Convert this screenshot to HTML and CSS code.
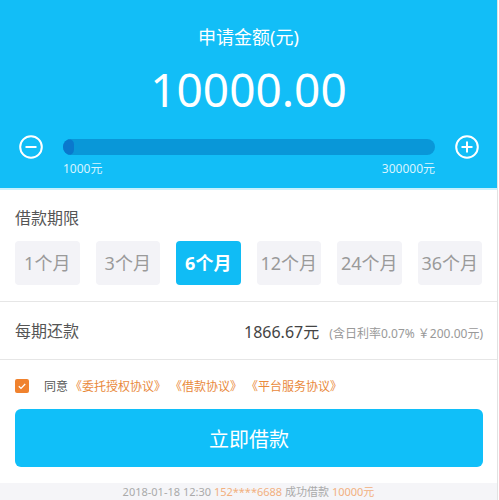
FILE: index.html
```html
<!DOCTYPE html>
<html lang="zh-CN">
<head>
  <meta charset="UTF-8" />
  <meta name="viewport" content="width=device-width, initial-scale=1.0"/>
  <title>申请借款</title>
  <link rel="stylesheet" href="styles.css">
</head>
<body>
  <div class="page">
    <div class="head">
      <h1 class="title">申请金额(元)</h1>
      <div class="amount">10000.00</div>
      <div class="slider">
        <span class="round">
          <svg width="24" height="24" viewBox="0 0 24 24"><circle cx="12" cy="12" r="10.8" fill="none" stroke="#fff" stroke-width="2"/><path d="M6.5 12h11" stroke="#fff" stroke-width="2"/></svg>
        </span>
        <div class="track"><div class="fill" style="width: 11px"></div></div>
        <span class="round">
          <svg width="24" height="24" viewBox="0 0 24 24"><circle cx="12" cy="12" r="10.8" fill="none" stroke="#fff" stroke-width="2"/><path d="M6.5 12h11M12 6.5v11" stroke="#fff" stroke-width="2"/></svg>
        </span>
      </div>
      <div class="range">
        <span>1000元</span>
        <span>300000元</span>
      </div>
    </div>

    <div class="term">
      <div class="label">借款期限</div>
      <div class="months">
        <div class="month">1个月</div>
        <div class="month">3个月</div>
        <div class="month selected">6个月</div>
        <div class="month">12个月</div>
        <div class="month">24个月</div>
        <div class="month">36个月</div>
      </div>
    </div>

    <div class="repay">
      <div class="label">每期还款</div>
      <div class="sum">1866.67元 <small>(含日利率0.07% ￥200.00元)</small></div>
    </div>

    <div class="agree">
      <span class="check">
        <svg width="14" height="14" viewBox="0 0 14 14"><rect width="14" height="14" rx="2" fill="#f0822e"/><path d="M3.8 7.2l2.2 2.2 4.2-4.4" fill="none" stroke="#fff" stroke-width="1.3"/></svg>
      </span>
      <span class="agree-text">同意</span>
      <a class="doc">《委托授权协议》</a>
      <a class="doc">《借款协议》</a>
      <a class="doc">《平台服务协议》</a>
    </div>

    <button class="submit">立即借款</button>

    <div class="notice">
      2018-01-18 12:30 <span class="hl">152****6688</span> 成功借款 <span class="hl">10000元</span>
    </div>
  </div>
</body>
</html>
```

FILE: styles.css
```css
body {
  margin: 0;
  padding: 0;
  font-family: "Noto Sans", "Noto Sans CJK SC", sans-serif;
  background: #fff;
  overflow: hidden;
}
.page {
  width: 497px;
  border-right: 1px solid #e2e2e2;
  min-height: 520px;
}
.head {
  height: 190px;
  padding-top: 25px;
  box-sizing: border-box;
  background: #12bef7;
  border-bottom: 2px solid #c8f1fd;
  color: #fff;
  text-align: center;
}
.title {
  margin: 0;
  font-size: 18px;
  font-weight: normal;
  line-height: 24px;
}
.amount {
  margin-top: 13px;
  font-size: 46px;
  line-height: 54px;
}
.slider {
  display: flex;
  align-items: center;
  gap: 20px;
  margin-top: 19px;
  padding: 0 18px 0 19px;
}
.round {
  display: flex;
  width: 24px;
  height: 24px;
}
.track {
  flex: 1;
  height: 16px;
  border-radius: 8px;
  background: #0997d8;
  overflow: hidden;
}
.fill {
  height: 100%;
  background: #0a78cd;
  border-radius: 8px;
}
.range {
  display: flex;
  justify-content: space-between;
  margin: 2px 62px 0 63px;
  font-size: 12px;
  line-height: 15px;
  color: #d8f4ff;
}
.label {
  font-size: 16px;
  line-height: 22px;
  color: #555;
}
.term {
  padding: 17px 15px 16px;
  border-bottom: 1px solid #e6e6e6;
}
.months {
  display: grid;
  grid-template-columns: repeat(6, 1fr);
  gap: 16px;
  margin-top: 12px;
}
.month {
  height: 44px;
  line-height: 44px;
  text-align: center;
  font-size: 18px;
  color: #9a9a9a;
  background: #f3f3f7;
  border-radius: 4px;
}
.month.selected {
  background: #10bcf5;
  color: #fff;
  font-weight: bold;
}
.repay {
  display: flex;
  justify-content: space-between;
  align-items: center;
  height: 57px;
  padding: 0 14px 0 15px;
  border-bottom: 1px solid #e6e6e6;
}
.sum {
  font-size: 16px;
  color: #444;
}
.sum small {
  margin-left: 6px;
  font-size: 12px;
  color: #999;
}
.agree {
  display: flex;
  align-items: center;
  height: 52px;
  padding: 0 15px;
  font-size: 12px;
}
.check {
  display: flex;
  margin-right: 15px;
}
.agree-text {
  color: #555;
  margin-right: 2px;
}
.doc {
  color: #e9893b;
  margin-right: 4px;
}
.submit {
  display: block;
  width: 468px;
  height: 58px;
  margin: -3px 0 0 15px;
  border: none;
  border-radius: 6px;
  background: #10bff9;
  color: #fff;
  font-family: inherit;
  font-size: 20px;
}
.notice {
  margin-top: 16px;
  padding: 2px 0 8px;
  background: #f5f5f8;
  text-align: center;
  font-size: 11px;
  line-height: 14px;
  color: #aaa;
}
.hl {
  color: #f2b080;
}
```
